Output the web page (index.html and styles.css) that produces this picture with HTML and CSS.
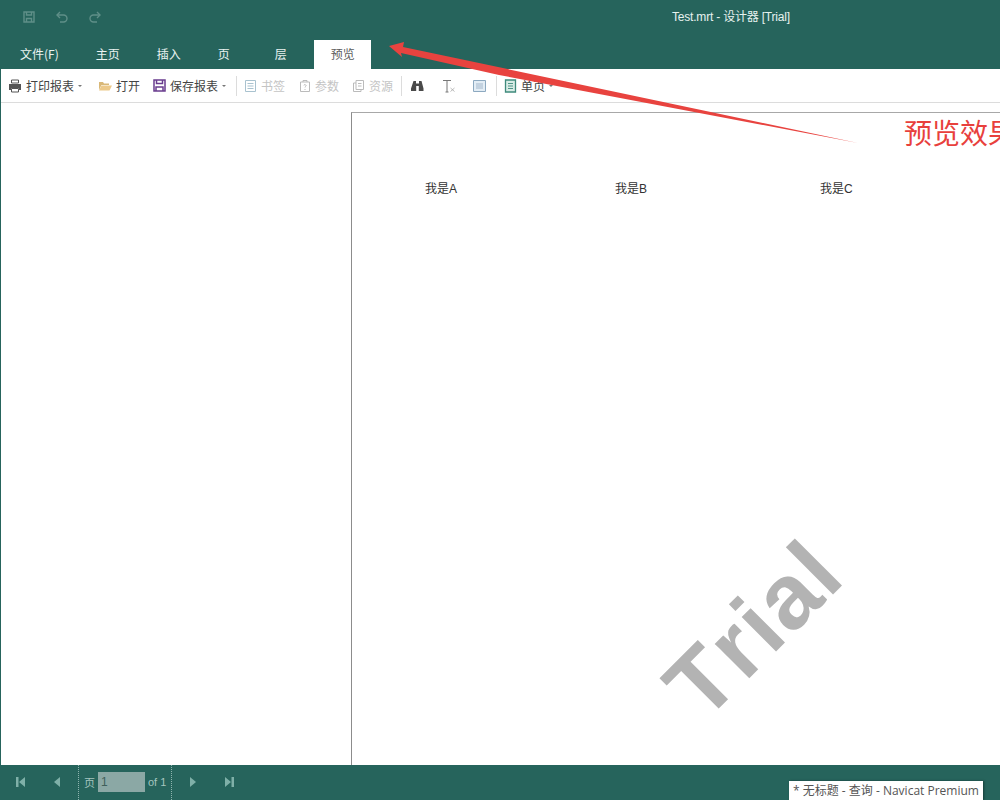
FILE: index.html
```html
<!doctype html>
<html lang="zh-CN">
<head>
    <meta charset="UTF-8" />
    <title>Test.mrt - 设计器 [Trial]</title>
    <link rel="stylesheet" href="styles.css">
</head>
<body>

<div class="app">
    <div class="title-bar">
        <div class="quick-icons">
            <svg width="14" height="14" viewBox="0 0 14 14" fill="none" stroke="#5f8f88" stroke-width="1.4"><path d="M2 2h10v10H2z"/><path d="M4.5 2v3h5V2M4.5 12V8.5h5V12"/></svg>
            <svg width="14" height="14" viewBox="0 0 14 14" fill="none" stroke="#5f8f88" stroke-width="1.4"><path d="M2.5 5h6a3 3 0 0 1 0 7H5"/><path d="M5 2L2 5l3 3"/></svg>
            <svg width="14" height="14" viewBox="0 0 14 14" fill="none" stroke="#5f8f88" stroke-width="1.4"><path d="M11.5 5h-6a3 3 0 0 0 0 7H9"/><path d="M9 2l3 3-3 3"/></svg>
        </div>
        <div class="app-title">Test.mrt - 设计器 [Trial]</div>
    </div>

    <div class="tabs">
        <div class="tab tab-file">文件(F)</div>
        <div class="tab tab-home">主页</div>
        <div class="tab tab-insert">插入</div>
        <div class="tab tab-page">页</div>
        <div class="tab tab-layer">层</div>
        <div class="tab tab-active">预览</div>
    </div>

    <div class="toolbar">
        <div class="tool tool-print">
            <svg width="14" height="14" viewBox="0 0 14 14"><path d="M3.5 1h7v3h-7z" fill="none" stroke="#555"/><path d="M1 5h12v6h-2V9H3v2H1z" fill="#555"/><path d="M3.5 9.5h7V13h-7z" fill="none" stroke="#555"/></svg>
            <span>打印报表</span><i class="caret"></i>
        </div>
        <div class="tool tool-open">
            <svg width="14" height="14" viewBox="0 0 14 14"><path d="M1 3h4l1 1.500h5V6H3.500L1 11z" fill="#d9b878"/><path d="M3.500 6.500H14L11.500 11.500H1z" fill="#ecc98a"/></svg>
            <span>打开</span>
        </div>
        <div class="tool tool-save">
            <svg width="13" height="13" viewBox="0 0 13 13" fill="none" stroke="#6a3d8f" stroke-width="1.500"><path d="M1 1h11v11H1z"/><path d="M3.500 1v3.500h6V1M3 12V8h7v4"/></svg>
            <span>保存报表</span><i class="caret"></i>
        </div>
        <i class="tool-sep sep-one"></i>
        <div class="tool tool-bookmark off">
            <svg width="13" height="14" viewBox="0 0 13 14" fill="none" stroke="#a9c2cf"><path d="M1.500 1.500h10v11h-10z"/><path d="M3.500 4.500h6M3.500 7h6M3.500 9.500h6"/></svg>
            <span>书签</span>
        </div>
        <div class="tool tool-params off">
            <svg width="12" height="14" viewBox="0 0 12 14" fill="none" stroke="#bbb"><path d="M1.500 3h9v9.500h-9z"/><path d="M4 3V1.500h4V3M5 6.500a1 1 0 1 1 1.500 1L6 8.500M6 10v1"/></svg>
            <span>参数</span>
        </div>
        <div class="tool tool-res off">
            <svg width="13" height="14" viewBox="0 0 13 14" fill="none" stroke="#bbb"><path d="M4 1.500h7.500v9H4z"/><path d="M4 4H1.500v8.500H9v-2M6 4.500h3.500M6 7h3.500"/></svg>
            <span>资源</span>
        </div>
        <i class="tool-sep sep-two"></i>
        <svg class="icon-find" width="13" height="12" viewBox="0 0 13 12" fill="#4a4a4a"><path d="M2.500 1h2.500v2.500h3V1h2.500l2 7.500V11H7.800V6H5.200v5H0V8.500z"/></svg>
        <svg class="icon-text" width="12" height="14" viewBox="0 0 12 14"><path d="M0 1.500h8M4 1.500V13M2.500 13h3" fill="none" stroke="#777"/><path d="M7.500 9l4 3.500M11.500 9l-4 3.500" fill="none" stroke="#aaa" stroke-width=".8"/></svg>
        <svg class="icon-image" width="13" height="12" viewBox="0 0 13 12"><path d="M.5 .5h12v11H.5z" fill="#e3edf5" stroke="#8da9c0"/><path d="M3 3h7v6H3z" fill="#c3d2e0"/></svg>
        <i class="tool-sep sep-three"></i>
        <div class="tool tool-single">
            <svg width="13" height="14" viewBox="0 0 13 14" fill="#d8ece6" stroke="#3f8a7c" stroke-width="1.300"><path d="M1.500 1h10v12h-10z"/><path d="M4 4.500h5M4 7h5M4 9.500h5" stroke-width=".9"/></svg>
            <span>单页</span><i class="caret"></i>
        </div>
    </div>

    <div class="viewer">
        <div class="side-panel"></div>
        <div class="sheet">
            <div class="sheet-row">
                <span class="cell cell-a">我是A</span>
                <span class="cell cell-b">我是B</span>
                <span class="cell cell-c">我是C</span>
            </div>
            <div class="watermark">Trial</div>
        </div>
    </div>

    <div class="pager">
        <svg class="pg-first" width="9" height="10" viewBox="0 0 9 10" fill="#7fb0a8"><path d="M0 0h2.500v10H0zM9 0v10L3 5z"/></svg>
        <svg class="pg-prev" width="7" height="10" viewBox="0 0 7 10" fill="#7fb0a8"><path d="M7 0v10L1 5z"/></svg>
        <div class="pg-box">
            <span>页</span>
            <span class="pg-input">1</span>
            <span>of 1</span>
        </div>
        <svg class="pg-next" width="7" height="10" viewBox="0 0 7 10" fill="#7fb0a8"><path d="M0 0v10l6-5z"/></svg>
        <svg class="pg-last" width="9" height="10" viewBox="0 0 9 10" fill="#7fb0a8"><path d="M0 0v10l6-5zM6.500 0H9v10H6.500z"/></svg>
    </div>
</div>

<!-- annotation drawn on top of the screenshot -->
<svg class="arrow" width="480" height="110" viewBox="0 0 480 110">
    <path d="M0 4L15 0L14 5L469 101L110 33L12 11L13 15z" fill="#e8433f"/>
</svg>
<div class="note">预览效果</div>
<div class="task-tip">* 无标题 - 查询 - Navicat Premium</div>

</body>
</html>
```

FILE: styles.css
```css
html, body {
    margin: 0;
    height: 100%;
    overflow: hidden;
}
body {
    font-family: "Noto Sans CJK SC", "Liberation Sans", sans-serif;
    font-size: 12px;
    color: #444;
    background: #fff;
}
svg {
    display: block;
    flex: none;
}
.app {
    display: flex;
    flex-direction: column;
    height: 800px;
    width: 1000px;
    border-left: 1px solid #26645c;
    box-sizing: border-box;
}

/* title bar */
.title-bar {
    display: flex;
    align-items: center;
    height: 40px;
    flex: none;
    background: #26645c;
    margin-left: -1px;
    padding-bottom: 8px;
    box-sizing: border-box;
}
.quick-icons {
    display: flex;
    gap: 19px;
    margin-left: 22px;
    margin-top: 2px;
}
.app-title {
    margin-left: 570px;
    margin-bottom: 1px;
    color: #e6f2ef;
    font-family: "Liberation Sans", "Noto Sans CJK SC", sans-serif;
    font-size: 12px;
    letter-spacing: -0.2px;
}

/* tabs */
.tabs {
    display: flex;
    align-items: stretch;
    height: 29px;
    flex: none;
    background: #26645c;
    margin-left: -1px;
}
.tab {
    display: flex;
    align-items: center;
    padding-bottom: 1px;
    box-sizing: border-box;
    color: #eaf3f1;
    line-height: 28px;
}
.tab-file { margin-left: 20px; }
.tab-home { margin-left: 37px; }
.tab-insert { margin-left: 37px; }
.tab-page { margin-left: 37px; }
.tab-layer { margin-left: 45px; }
.tab-active {
    margin-left: 27px;
    padding: 0 16px 1px 17px;
    background: #fff;
    color: #5b5b5b;
}

/* toolbar */
.toolbar {
    display: flex;
    align-items: center;
    height: 33px;
    flex: none;
    background: #fff;
    border-bottom: 1px solid #dcdcdc;
}
.tool {
    display: flex;
    align-items: center;
    gap: 4px;
}
.tool.off {
    color: #c4c4c4;
}
.caret {
    width: 0;
    height: 0;
    margin-left: 0;
    margin-right: 1px;
    border: 2.500px solid transparent;
    border-top-color: #777;
    border-bottom-width: 0;
}
.tool-sep {
    width: 1px;
    height: 20px;
    background: #dcdcdc;
    flex: none;
}
.tool-print { margin-left: 7px; }
.tool-open { margin-left: 15px; }
.tool-save { margin-left: 13px; }
.sep-one { margin-left: 9px; }
.tool-bookmark { margin-left: 7px; }
.tool-params { margin-left: 14px; }
.tool-res { margin-left: 13px; }
.sep-two { margin-left: 8px; }
.icon-find { margin-left: 9px; }
.icon-text { margin-left: 19px; }
.icon-image { margin-left: 18px; }
.sep-three { margin-left: 10px; }
.tool-single { margin-left: 7px; }

/* preview area */
.viewer {
    display: flex;
    flex: 1;
    min-height: 0;
    background: #fff;
}
.side-panel {
    width: 350px;
    flex: none;
}
.sheet {
    position: relative;
    flex: 1;
    margin-top: 9px;
    border-left: 1px solid #8c8c8c;
    border-top: 1px solid #a8a8a8;
    overflow: hidden;
}
.sheet-row {
    display: flex;
    padding-top: 67px;
    line-height: 18px;
    color: #333;
}
.cell {
    white-space: nowrap;
    font-family: "Liberation Sans", "Noto Sans CJK SC", sans-serif;
}
.cell-a { margin-left: 73px; }
.cell-b { margin-left: 158px; }
.cell-c { margin-left: 173px; }
.watermark {
    position: absolute;
    left: 299px;
    top: 463px;
    font-family: "Liberation Sans", sans-serif;
    font-weight: bold;
    font-size: 92px;
    line-height: 106px;
    letter-spacing: 2px;
    font-kerning: none;
    color: #b3b3b3;
    transform: rotate(-45deg);
}

/* page nav */
.pager {
    display: flex;
    align-items: center;
    height: 35px;
    flex: none;
    background: #26645c;
    margin-left: -1px;
    color: #a5c4bf;
}
.pager svg {
    margin-bottom: 2px;
}
.pg-first { margin-left: 16px; }
.pg-prev { margin-left: 28px; }
.pg-box {
    display: flex;
    align-items: center;
    gap: 3px;
    align-self: stretch;
    margin-left: 18px;
    padding: 0 5px 2px;
    border-left: 1px dotted #8fb5af;
    border-right: 1px dotted #8fb5af;
    font-family: "Liberation Sans", "Noto Sans CJK SC", sans-serif;
    font-size: 11px;
}
.pg-input {
    width: 44px;
    height: 20px;
    padding-left: 3px;
    line-height: 20px;
    background: #8ba8a5;
    color: #3f5f5a;
    font-size: 12px;
}
.pg-next { margin-left: 18px; }
.pg-last { margin-left: 28px; }

/* overlays */
.arrow {
    position: absolute;
    left: 389px;
    top: 42px;
}
.note {
    position: absolute;
    left: 904px;
    top: 112px;
    width: 96px;
    overflow: hidden;
    white-space: nowrap;
    font-size: 28px;
    line-height: 40px;
    color: #e8403c;
    font-family: "Noto Sans CJK SC", sans-serif;
}
.task-tip {
    position: absolute;
    left: 789px;
    top: 781px;
    width: 194px;
    height: 19px;
    box-sizing: border-box;
    padding-left: 4px;
    background: #fff;
    box-shadow: 1px 0 2px #173d38;
    font-family: "Open Sans", "Noto Sans CJK SC", sans-serif;
    font-size: 12px;
    line-height: 19px;
    color: #555;
    white-space: nowrap;
    overflow: hidden;
}
```
